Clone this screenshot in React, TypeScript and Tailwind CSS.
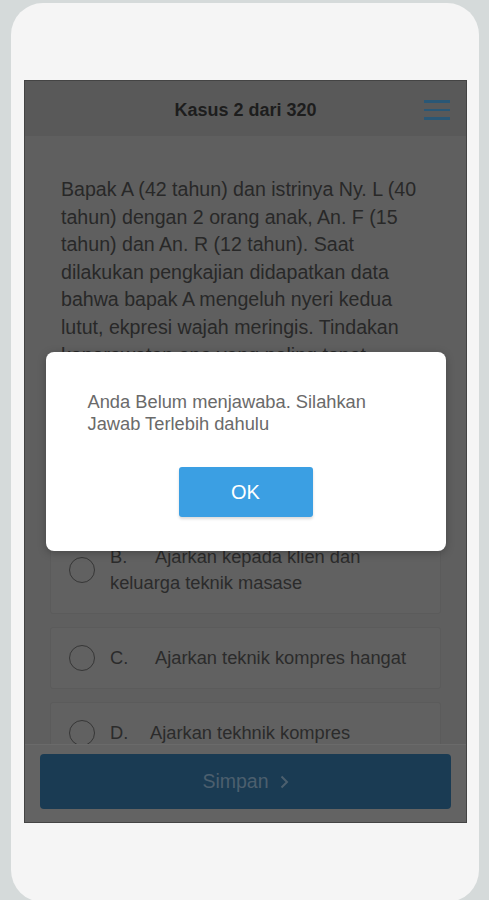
import React from "react";

function Radio() {
  return <div className="h-[26px] w-[26px] shrink-0 rounded-full border-[1.5px] border-[#363636]" />;
}

function Option({ letter, text, w }: { letter: string; text: string; w: string }) {
  return (
    <div className="mb-[13px] flex items-center gap-[15px] rounded-[3px] border border-[#5b5b5b] bg-[#616161] py-[17px] pl-[18px] pr-[20px]">
      <Radio />
      <div className="text-[18.3px] leading-[26px] text-[#2b2b2b]">
        <span className={w === "d" ? "inline-block w-[40px]" : "inline-block w-[45px]"}>{letter}</span>
        {text}
      </div>
    </div>
  );
}

export default function App() {
  return (
    <div className="h-[900px] w-full overflow-hidden bg-[#d5dada] pl-[11px] pt-[3px] font-['Liberation_Sans',Arial,sans-serif]">
      <div className="h-[899px] w-[468px] rounded-[32px] bg-[#f5f5f5] pl-[13px] pt-[77px]">
        <div className="relative flex h-[743px] w-[443px] flex-col overflow-hidden border border-[#444444] bg-[#5f5f5f]">
          {/* header */}
          <div className="grid h-[55px] shrink-0 grid-cols-[1fr_auto_1fr] items-center bg-[#595959] pt-[3px]">
            <div />
            <div className="text-[18px] font-bold text-[#1d1d1d]">Kasus 2 dari 320</div>
            <div className="flex justify-end pr-[16px]">
              <div className="flex w-[26px] flex-col gap-[6px]">
                <div className="h-[2.5px] bg-[#2a5775]" />
                <div className="h-[2.5px] bg-[#2a5775]" />
                <div className="h-[2.5px] bg-[#2a5775]" />
              </div>
            </div>
          </div>

          {/* main */}
          <div className="flex-1 overflow-hidden px-[25px] pt-[40px]">
            <p className="mb-[28px] pl-[11px] pr-[14px] text-[19.6px] leading-[27.6px] text-[#282828]">
              Bapak A (42 tahun) dan istrinya Ny. L (40 tahun) dengan 2 orang anak, An. F (15 tahun) dan An. R (12 tahun). Saat dilakukan pengkajian didapatkan data bahwa bapak A mengeluh nyeri kedua lutut, ekpresi wajah meringis. Tindakan keperawatan apa yang paling tepat dilakukan?
            </p>
            <Option letter="A." text="Anjurkan klien untuk istirahat yang cukup" w="a" />
            <Option letter="B." text="Ajarkan kepada klien dan keluarga teknik masase" w="b" />
            <Option letter="C." text="Ajarkan teknik kompres hangat" w="c" />
            <Option letter="D." text="Ajarkan tekhnik kompres" w="d" />
          </div>

          {/* footer */}
          <div className="h-[78px] shrink-0 border-t border-[#6a6a6a] bg-[#636363] px-[15px] pt-[9px]">
            <div className="flex h-[55px] items-center justify-center gap-[11px] rounded-[4px] bg-[#1a3b53]">
              <span className="text-[19.5px] text-[#4c5f6e]">Simpan</span>
              <svg width="9" height="14" viewBox="0 0 9 14" fill="none">
                <polyline points="1.5,1.5 7,7 1.5,12.5" stroke="#4c5f6e" strokeWidth="2" />
              </svg>
            </div>
          </div>

          {/* modal overlay */}
          <div className="absolute inset-0 flex items-center justify-center">
            <div className="w-[400px] rounded-[8px] bg-white pb-[34px] pl-[42px] pr-[60px] pt-[39px] shadow-[0_2px_8px_rgba(0,0,0,0.25)]">
              <p className="text-[18.3px] leading-[22px] text-[#6a6a6a]">
                Anda Belum menjawaba. Silahkan Jawab Terlebih dahulu
              </p>
              <div className="mt-[32px] flex justify-center pl-[18px]">
                <button className="flex h-[50px] w-[134px] items-center justify-center rounded-[3px] bg-[#3b9fe3] text-[20px] text-white shadow-[0_2px_3px_rgba(0,0,0,0.15)]">
                  OK
                </button>
              </div>
            </div>
          </div>
        </div>
      </div>
    </div>
  );
}
